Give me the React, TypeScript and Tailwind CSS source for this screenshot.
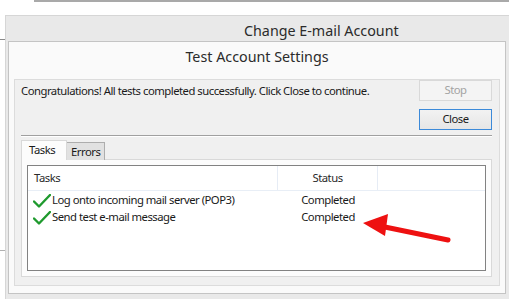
import React from "react";

const font = { fontFamily: '"Noto Sans", "Open Sans", sans-serif' };

function Check() {
  return (
    <svg width="18" height="14" viewBox="0 0 18 14" className="shrink-0">
      <path d="M1 7.5 L6 12.5 L17 1" fill="none" stroke="#1f9a2e" strokeWidth="2.4" strokeLinecap="round" strokeLinejoin="round" />
    </svg>
  );
}

function App() {
  const rows = [
    { task: "Log onto incoming mail server (POP3)", status: "Completed" },
    { task: "Send test e-mail message", status: "Completed" },
  ];

  return (
    <div className="relative w-[509px] h-[299px] overflow-hidden bg-white text-[#1a1a1a] text-[11.3px] tracking-[-0.5px]" style={font}>
      {/* top line of the window behind */}
      <div className="ml-[34px] h-[2px] bg-[#a9a9a9]" />

      {/* Change E-mail Account window */}
      <div className="ml-[5px] mt-[13px] h-[284px] border-l border-t border-[#d6d6d6] bg-[#e9e9e9]">
        <div className="h-[25px] pt-[5px] leading-[20px] pl-[238px] text-[14.3px] tracking-normal text-[#2b2b2b] whitespace-nowrap">
          Change E-mail Account
        </div>

        {/* Test Account Settings dialog */}
        <div className="ml-[2px] w-[498px] h-[253px] border border-[#c4c4c4] bg-[#fafafa] px-[5px]">
          <div className="h-[37px] pt-[5px] leading-[20px] text-center text-[14.3px] tracking-normal text-[#2b2b2b]">
            Test Account Settings
          </div>

          <div className="h-[207px] border border-[#dcdcdc] bg-[#f0f0f0] pl-[6px] pr-[7px]">
            <div className="flex justify-between">
              <div className="pt-[2px] leading-[18px] whitespace-nowrap">
                Congratulations! All tests completed successfully. Click Close to continue.
              </div>
              <div className="flex flex-col gap-[8px] w-[73px]">
                <div className="h-[21px] border border-[#d9d9d9] bg-[#f4f4f4] text-[#a3a3a3] flex items-center justify-center">
                  Stop
                </div>
                <div className="h-[21px] border border-[#3c8ad9] bg-gradient-to-b from-[#f2f2f2] to-[#e6e6e6] flex items-center justify-center">
                  Close
                </div>
              </div>
            </div>

            <div className="mt-[5px] h-px bg-[#a0a0a0]" />
            <div className="h-px bg-white" />

            {/* tabs */}
            <div className="mt-[3px] flex items-end h-[20px]">
              <div className="h-[20px] w-[46px] border border-b-0 border-[#d9d9d9] bg-[#fcfcfc] pl-[7px] leading-[18px] relative z-10">
                Tasks
              </div>
              <div className="h-[18px] w-[38px] border border-b-0 border-l-0 border-[#adadad] bg-[#e1e1e1] pl-[4px] leading-[17px]">
                Errors
              </div>
            </div>

            {/* tab panel */}
            <div className="-mt-px h-[118px] border border-[#d9d9d9] bg-[#fcfcfc] p-[5px]">
              <div className="h-[106px] border border-[#828282] bg-white">
                <div className="flex h-[25px] border-b border-[#e8eef6] text-[#2a2a2a]">
                  <div className="w-[250px] border-r border-[#e6ecf5] pl-[6px] flex items-center">Tasks</div>
                  <div className="w-[100px] border-r border-[#e6ecf5] flex items-center justify-center">Status</div>
                </div>
                <div className="pt-[1px]">
                  {rows.map((r, i) => (
                    <div key={i} className="flex h-[17px] items-center">
                      <div className="w-[250px] flex items-center pl-[5px] gap-[1px]">
                        <Check />
                        <span>{r.task}</span>
                      </div>
                      <div className="w-[100px] flex justify-center">{r.status}</div>
                    </div>
                  ))}
                </div>
              </div>
            </div>
          </div>
        </div>
      </div>

      {/* bits of the window behind */}
      <div className="absolute left-0 top-[39px] w-[5px] h-px bg-[#8a8a8a]" />
      <div className="absolute left-0 top-[250px] w-[5px] h-px bg-[#b0b0b0]" />

      {/* red annotation arrow */}
      <svg className="absolute left-0 top-0" width="509" height="299" viewBox="0 0 509 299">
        <line x1="448" y1="240" x2="380" y2="226" stroke="#ee1111" strokeWidth="5" strokeLinecap="round" />
        <polygon points="363,223 388,214 385,236" fill="#ee1111" />
      </svg>
    </div>
  );
}

export default App;
